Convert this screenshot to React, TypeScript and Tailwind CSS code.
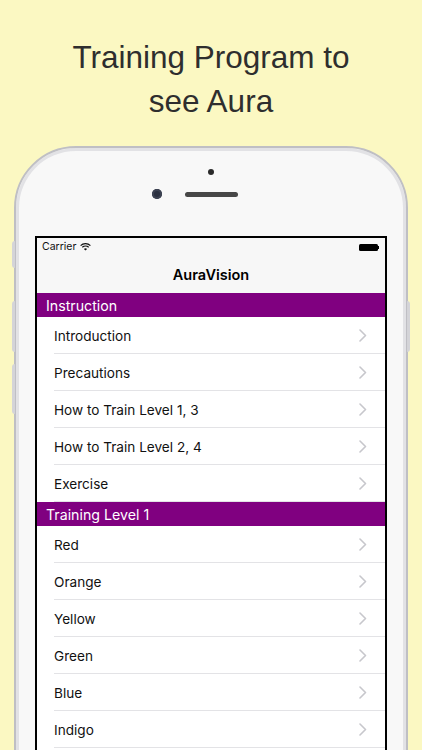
import React from "react";

const Chevron = () => (
  <svg width="8" height="13" viewBox="0 0 8 13" fill="none">
    <path d="M1 1l5.5 5.5L1 12" stroke="#c7c7cc" strokeWidth="1.6" strokeLinecap="round" strokeLinejoin="round" />
  </svg>
);

const Row = ({ label }: { label: string }) => (
  <div className="h-[37px] pl-[17px] flex">
    <div className="flex-1 flex items-center justify-between pr-[18px] border-b border-[#e3e3e6]">
      <span className="text-[13.6px] text-[#111] pt-[3px]">{label}</span>
      <Chevron />
    </div>
  </div>
);

const Header = ({ label }: { label: string }) => (
  <div className="h-[24px] bg-[#800080] flex items-center pl-[9px]">
    <span className="text-[14.2px] text-white pt-[2px]">{label}</span>
  </div>
);

export default function App() {
  return (
    <div className="w-[422px] h-[750px] overflow-hidden bg-[#fbf8c2] flex flex-col items-center" style={{ fontFamily: "Inter, 'Noto Sans', sans-serif" }}>
      <h1 className="pt-[35px] text-center text-[31.5px] leading-[44px] text-[#2e2e2e]" style={{ fontFamily: "'Liberation Sans', Arial, sans-serif" }}>
        Training Program to
        <br />
        see Aura
      </h1>
      <div className="relative mt-[23px] w-[394px] h-[700px] shrink-0 rounded-t-[62px] border-[2px] border-[#bfbfc4] bg-[#f8f8f8] shadow-[inset_0_0_0_3px_#e2e2e5] flex flex-col items-center">
        <div className="absolute left-[-4px] top-[93px] w-[3px] h-[27px] rounded-l bg-[#d4d4d8]" />
        <div className="absolute left-[-4px] top-[153px] w-[3px] h-[51px] rounded-l bg-[#d4d4d8]" />
        <div className="absolute left-[-4px] top-[216px] w-[3px] h-[50px] rounded-l bg-[#d4d4d8]" />
        <div className="absolute right-[-4px] top-[153px] w-[3px] h-[51px] rounded-r bg-[#d4d4d8]" />
        <div className="mt-[21px] w-[6px] h-[6px] rounded-full bg-[#2a2a2a]" />
        <div className="mt-[14px] flex items-center gap-[23px]">
          <div className="w-[10px] h-[10px] rounded-full bg-[#2b3140] shadow-[inset_0_0_0_2px_#3c4252]" />
          <div className="w-[53px] h-[5px] rounded-full bg-[#474747]" />
          <div className="w-[10px] h-[10px]" />
        </div>
        <div className="mt-[37px] w-[352px] flex-1 border-2 border-black bg-white flex flex-col">
          <div className="h-[18px] bg-[#f7f7f7] flex items-center justify-between px-[5px]">
            <div className="flex items-center gap-[4px]">
              <span className="text-[10.5px] text-[#111]">Carrier</span>
              <svg width="11" height="8" viewBox="0 0 11 8">
                <path d="M0.6 2.6a7 7 0 0 1 9.8 0" stroke="#111" strokeWidth="1.2" fill="none" />
                <path d="M2.3 4.3a4.6 4.6 0 0 1 6.4 0" stroke="#111" strokeWidth="1.2" fill="none" />
                <path d="M5.5 7.6L3.9 6a2.3 2.3 0 0 1 3.2 0z" fill="#111" />
              </svg>
            </div>
            <div className="flex items-center mr-[1px]">
              <div className="w-[19px] h-[7px] rounded-[1.5px] bg-black" />
              <div className="w-[1.5px] h-[3px] bg-black" />
            </div>
          </div>
          <div className="h-[37px] bg-[#f7f7f7] flex items-center justify-center">
            <span className="text-[14.5px] font-semibold text-black">AuraVision</span>
          </div>
          <Header label="Instruction" />
          {["Introduction", "Precautions", "How to Train Level 1, 3", "How to Train Level 2, 4", "Exercise"].map((l) => (
            <Row key={l} label={l} />
          ))}
          <Header label="Training Level 1" />
          {["Red", "Orange", "Yellow", "Green", "Blue", "Indigo"].map((l) => (
            <Row key={l} label={l} />
          ))}
        </div>
      </div>
    </div>
  );
}
